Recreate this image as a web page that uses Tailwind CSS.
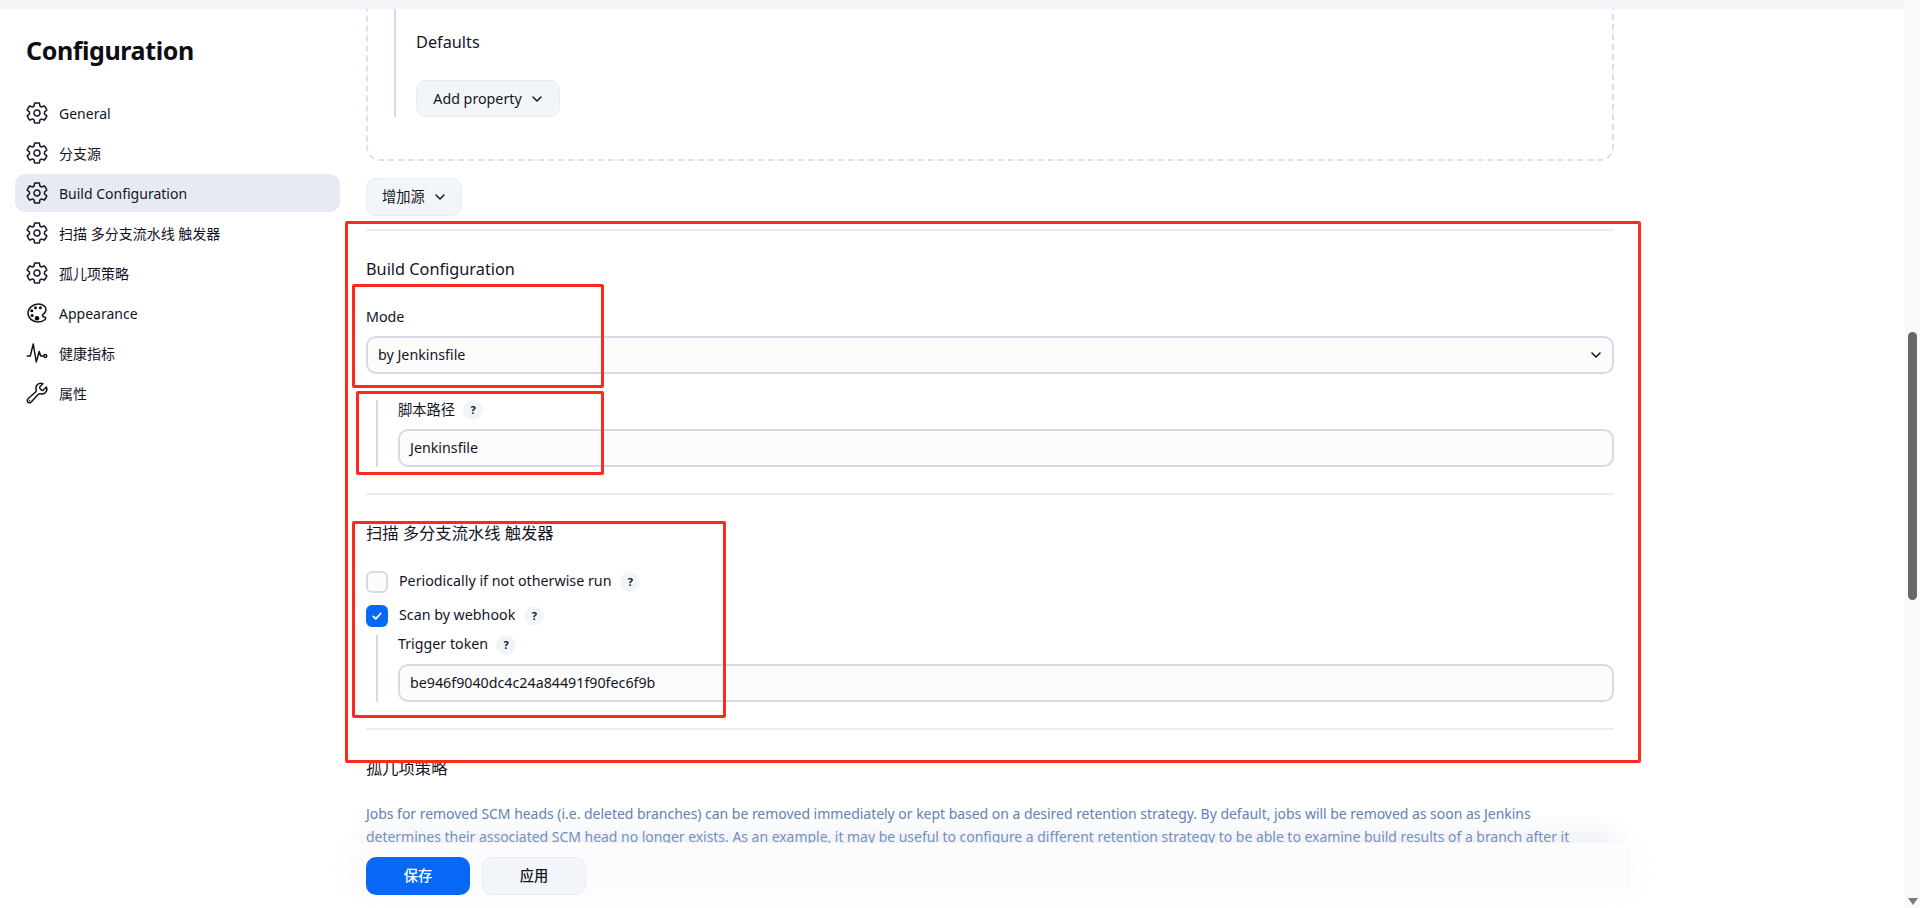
<!DOCTYPE html>
<html lang="zh">
<head>
<meta charset="utf-8">
<script src="https://cdn.jsdelivr.net/npm/@tailwindcss/browser@4"></script>
<title>Configuration</title>
</head>
<body class="bg-white">
<div class="relative flex h-[908px] w-[1920px] overflow-hidden bg-white text-[14px] text-[#14141f] font-['Noto_Sans','Noto_Sans_CJK_SC',sans-serif]">

  <!-- Soft haze behind the text that runs under the save bar -->
  <div class="absolute left-[365px] top-[830px] z-0 h-[30px] w-[1250px] bg-[#e9edf5]/70 blur-[10px]"></div>

  <!-- Sidebar -->
  <aside class="relative z-10 w-[366px] shrink-0 pl-[15px] pt-[32px]">
    <h1 class="pl-[11px] text-[25px] leading-[36px] font-bold tracking-[-0.4px] text-[#0d0d14]">Configuration</h1>
    <nav class="mt-[26px] flex w-[325px] flex-col gap-[2px]">
      <a class="flex h-[38px] items-center gap-[10px] rounded-[10px] pl-[10px]"><svg class="h-[24px] w-[24px]" viewBox="0 0 512 512"><path d="M262.29 192.31a64 64 0 1057.4 57.4 64.13 64.13 0 00-57.4-57.4zM416.39 256a154.34 154.34 0 01-1.53 20.79l45.21 35.46a10.81 10.81 0 012.45 13.75l-42.77 74a10.81 10.81 0 01-13.14 4.59l-44.9-18.08a16.11 16.11 0 00-15.17 1.75A164.48 164.48 0 01325 400.8a15.94 15.94 0 00-8.82 12.14l-6.73 47.89a11.08 11.08 0 01-10.68 9.17h-85.54a11.11 11.11 0 01-10.69-8.87l-6.72-47.82a16.07 16.07 0 00-9-12.22 155.3 155.3 0 01-21.46-12.57 16 16 0 00-15.11-1.71l-44.89 18.07a10.81 10.81 0 01-13.14-4.58l-42.77-74a10.8 10.8 0 012.45-13.75l38.21-30a16.05 16.05 0 006-14.08c-.36-4.17-.58-8.33-.58-12.5s.21-8.27.58-12.35a16 16 0 00-6.07-13.94l-38.19-30A10.81 10.81 0 0149.48 186l42.77-74a10.81 10.81 0 0113.14-4.59l44.9 18.08a16.11 16.11 0 0015.17-1.75A164.48 164.48 0 01187 111.2a15.94 15.94 0 008.82-12.14l6.73-47.89A11.08 11.08 0 01213.23 42h85.54a11.11 11.11 0 0110.69 8.87l6.72 47.82a16.07 16.07 0 009 12.22 155.3 155.3 0 0121.46 12.57 16 16 0 0015.11 1.71l44.89-18.07a10.81 10.81 0 0113.14 4.58l42.77 74a10.8 10.8 0 01-2.45 13.75l-38.21 30a16.05 16.05 0 00-6.07 14.08c.33 4.14.55 8.3.55 12.47z" fill="none" stroke="currentColor" stroke-linecap="round" stroke-linejoin="round" stroke-width="32"/></svg><span>General</span></a>
      <a class="flex h-[38px] items-center gap-[10px] rounded-[10px] pl-[10px]"><svg class="h-[24px] w-[24px]" viewBox="0 0 512 512"><path d="M262.29 192.31a64 64 0 1057.4 57.4 64.13 64.13 0 00-57.4-57.4zM416.39 256a154.34 154.34 0 01-1.53 20.79l45.21 35.46a10.81 10.81 0 012.45 13.75l-42.77 74a10.81 10.81 0 01-13.14 4.59l-44.9-18.08a16.11 16.11 0 00-15.17 1.75A164.48 164.48 0 01325 400.8a15.94 15.94 0 00-8.82 12.14l-6.73 47.89a11.08 11.08 0 01-10.68 9.17h-85.54a11.11 11.11 0 01-10.69-8.87l-6.72-47.82a16.07 16.07 0 00-9-12.22 155.3 155.3 0 01-21.46-12.57 16 16 0 00-15.11-1.71l-44.89 18.07a10.81 10.81 0 01-13.14-4.58l-42.77-74a10.8 10.8 0 012.45-13.75l38.21-30a16.05 16.05 0 006-14.08c-.36-4.17-.58-8.33-.58-12.5s.21-8.27.58-12.35a16 16 0 00-6.07-13.94l-38.19-30A10.81 10.81 0 0149.48 186l42.77-74a10.81 10.81 0 0113.14-4.59l44.9 18.08a16.11 16.11 0 0015.17-1.75A164.48 164.48 0 01187 111.2a15.94 15.94 0 008.82-12.14l6.73-47.89A11.08 11.08 0 01213.23 42h85.54a11.11 11.11 0 0110.69 8.87l6.72 47.82a16.07 16.07 0 009 12.22 155.3 155.3 0 0121.46 12.57 16 16 0 0015.11 1.71l44.89-18.07a10.81 10.81 0 0113.14 4.58l42.77 74a10.8 10.8 0 01-2.45 13.75l-38.21 30a16.05 16.05 0 00-6.07 14.08c.33 4.14.55 8.3.55 12.47z" fill="none" stroke="currentColor" stroke-linecap="round" stroke-linejoin="round" stroke-width="32"/></svg><span>分支源</span></a>
      <a class="flex h-[38px] items-center gap-[10px] rounded-[10px] bg-[#e6ebf3] pl-[10px]"><svg class="h-[24px] w-[24px]" viewBox="0 0 512 512"><path d="M262.29 192.31a64 64 0 1057.4 57.4 64.13 64.13 0 00-57.4-57.4zM416.39 256a154.34 154.34 0 01-1.53 20.79l45.21 35.46a10.81 10.81 0 012.45 13.75l-42.77 74a10.81 10.81 0 01-13.14 4.59l-44.9-18.08a16.11 16.11 0 00-15.17 1.75A164.48 164.48 0 01325 400.8a15.94 15.94 0 00-8.82 12.14l-6.73 47.89a11.08 11.08 0 01-10.68 9.17h-85.54a11.11 11.11 0 01-10.69-8.87l-6.72-47.82a16.07 16.07 0 00-9-12.22 155.3 155.3 0 01-21.46-12.57 16 16 0 00-15.11-1.71l-44.89 18.07a10.81 10.81 0 01-13.14-4.58l-42.77-74a10.8 10.8 0 012.45-13.75l38.21-30a16.05 16.05 0 006-14.08c-.36-4.17-.58-8.33-.58-12.5s.21-8.27.58-12.35a16 16 0 00-6.07-13.94l-38.19-30A10.81 10.81 0 0149.48 186l42.77-74a10.81 10.81 0 0113.14-4.59l44.9 18.08a16.11 16.11 0 0015.17-1.75A164.48 164.48 0 01187 111.2a15.94 15.94 0 008.82-12.14l6.73-47.89A11.08 11.08 0 01213.23 42h85.54a11.11 11.11 0 0110.69 8.87l6.72 47.82a16.07 16.07 0 009 12.22 155.3 155.3 0 0121.46 12.57 16 16 0 0015.11 1.71l44.89-18.07a10.81 10.81 0 0113.14 4.58l42.77 74a10.8 10.8 0 01-2.45 13.75l-38.21 30a16.05 16.05 0 00-6.07 14.08c.33 4.14.55 8.3.55 12.47z" fill="none" stroke="currentColor" stroke-linecap="round" stroke-linejoin="round" stroke-width="32"/></svg><span>Build Configuration</span></a>
      <a class="flex h-[38px] items-center gap-[10px] rounded-[10px] pl-[10px]"><svg class="h-[24px] w-[24px]" viewBox="0 0 512 512"><path d="M262.29 192.31a64 64 0 1057.4 57.4 64.13 64.13 0 00-57.4-57.4zM416.39 256a154.34 154.34 0 01-1.53 20.79l45.21 35.46a10.81 10.81 0 012.45 13.75l-42.77 74a10.81 10.81 0 01-13.14 4.59l-44.9-18.08a16.11 16.11 0 00-15.17 1.75A164.48 164.48 0 01325 400.8a15.94 15.94 0 00-8.82 12.14l-6.73 47.89a11.08 11.08 0 01-10.68 9.17h-85.54a11.11 11.11 0 01-10.69-8.87l-6.72-47.82a16.07 16.07 0 00-9-12.22 155.3 155.3 0 01-21.46-12.57 16 16 0 00-15.11-1.71l-44.89 18.07a10.81 10.81 0 01-13.14-4.58l-42.77-74a10.8 10.8 0 012.45-13.75l38.21-30a16.05 16.05 0 006-14.08c-.36-4.17-.58-8.33-.58-12.5s.21-8.27.58-12.35a16 16 0 00-6.07-13.94l-38.19-30A10.81 10.81 0 0149.48 186l42.77-74a10.81 10.81 0 0113.14-4.59l44.9 18.08a16.11 16.11 0 0015.17-1.75A164.48 164.48 0 01187 111.2a15.94 15.94 0 008.82-12.14l6.73-47.89A11.08 11.08 0 01213.23 42h85.54a11.11 11.11 0 0110.69 8.87l6.72 47.82a16.07 16.07 0 009 12.22 155.3 155.3 0 0121.46 12.57 16 16 0 0015.11 1.71l44.89-18.07a10.81 10.81 0 0113.14 4.58l42.77 74a10.8 10.8 0 01-2.45 13.75l-38.21 30a16.05 16.05 0 00-6.07 14.08c.33 4.14.55 8.3.55 12.47z" fill="none" stroke="currentColor" stroke-linecap="round" stroke-linejoin="round" stroke-width="32"/></svg><span>扫描 多分支流水线 触发器</span></a>
      <a class="flex h-[38px] items-center gap-[10px] rounded-[10px] pl-[10px]"><svg class="h-[24px] w-[24px]" viewBox="0 0 512 512"><path d="M262.29 192.31a64 64 0 1057.4 57.4 64.13 64.13 0 00-57.4-57.4zM416.39 256a154.34 154.34 0 01-1.53 20.79l45.21 35.46a10.81 10.81 0 012.45 13.75l-42.77 74a10.81 10.81 0 01-13.14 4.59l-44.9-18.08a16.11 16.11 0 00-15.17 1.75A164.48 164.48 0 01325 400.8a15.94 15.94 0 00-8.82 12.14l-6.73 47.89a11.08 11.08 0 01-10.68 9.17h-85.54a11.11 11.11 0 01-10.69-8.87l-6.72-47.82a16.07 16.07 0 00-9-12.22 155.3 155.3 0 01-21.46-12.57 16 16 0 00-15.11-1.71l-44.89 18.07a10.81 10.81 0 01-13.14-4.58l-42.77-74a10.8 10.8 0 012.45-13.75l38.21-30a16.05 16.05 0 006-14.08c-.36-4.17-.58-8.33-.58-12.5s.21-8.27.58-12.35a16 16 0 00-6.07-13.94l-38.19-30A10.81 10.81 0 0149.48 186l42.77-74a10.81 10.81 0 0113.14-4.59l44.9 18.08a16.11 16.11 0 0015.17-1.75A164.48 164.48 0 01187 111.2a15.94 15.94 0 008.82-12.14l6.73-47.89A11.08 11.08 0 01213.23 42h85.54a11.11 11.11 0 0110.69 8.87l6.72 47.82a16.07 16.07 0 009 12.22 155.3 155.3 0 0121.46 12.57 16 16 0 0015.11 1.71l44.89-18.07a10.81 10.81 0 0113.14 4.58l42.77 74a10.8 10.8 0 01-2.45 13.75l-38.21 30a16.05 16.05 0 00-6.07 14.08c.33 4.14.55 8.3.55 12.47z" fill="none" stroke="currentColor" stroke-linecap="round" stroke-linejoin="round" stroke-width="32"/></svg><span>孤儿项策略</span></a>
      <a class="flex h-[38px] items-center gap-[10px] rounded-[10px] pl-[10px]"><svg class="h-[24px] w-[24px]" viewBox="0 0 512 512"><path d="M430.11 347.9c-6.6-6.1-16.3-7.6-24.6-9-11.5-1.9-15.9-4-22.6-10-14.3-12.7-14.3-31.1 0-43.8l30.3-26.9c46.4-41 46.4-108.2 0-149.2-34.2-30.1-80.1-45-127.8-45-55.7 0-113.9 20.3-158.8 60.1-83.5 73.8-83.5 194.7 0 268.5 41.5 36.7 97.5 55 152.9 55.4h1.7c55.4 0 110-17.9 148.8-52.4 14.4-12.7 12-36.6.1-47.7z" fill="none" stroke="currentColor" stroke-miterlimit="10" stroke-width="32"/><circle cx="144" cy="208" r="32"/><circle cx="152" cy="311" r="32"/><circle cx="224" cy="144" r="32"/><circle cx="256" cy="367" r="48"/><circle cx="328" cy="144" r="32"/></svg><span>Appearance</span></a>
      <a class="flex h-[38px] items-center gap-[10px] rounded-[10px] pl-[10px]"><svg class="h-[24px] w-[24px]" viewBox="0 0 512 512" fill="none" stroke="currentColor" stroke-width="32" stroke-linecap="round" stroke-linejoin="round"><path d="M48 320h64l64-256 64 384 64-224 32 96h48"/><circle cx="432" cy="320" r="32"/></svg><span>健康指标</span></a>
      <a class="flex h-[38px] items-center gap-[10px] rounded-[10px] pl-[10px]"><svg class="h-[24px] w-[24px]" viewBox="0 0 512 512"><path d="M393.87 190a32.1 32.1 0 01-45.25 0l-26.57-26.57a32.09 32.09 0 010-45.26L382.19 58a1 1 0 00-.3-1.64c-38.82-16.64-89.15-8.16-121.11 23.57-30.58 30.35-32.32 76-21.12 115.84a31.93 31.93 0 01-9.06 32.08L64 380a48.17 48.17 0 1068 68l153.86-167a31.93 31.93 0 0131.6-9.13c39.54 10.59 84.54 8.6 114.72-21.19 32.49-32 39.5-88.56 23.75-120.93a1 1 0 00-1.6-.26z" fill="none" stroke="currentColor" stroke-linecap="round" stroke-miterlimit="10" stroke-width="32"/><circle cx="96" cy="416" r="16" fill="currentColor"/></svg><span>属性</span></a>
    </nav>
  </aside>

  <!-- Main form, scrolled so the dashed card starts above the window -->
  <main class="relative z-10 w-[1248px] shrink-0 text-[14.25px]">
    <div class="-mt-[40px] h-[201px] rounded-b-[14px] border-2 border-dashed border-[#dbe2ec] pl-[26px]">
      <div class="flex h-[155px] flex-col border-l-2 border-[#d5dae8] pl-[20px]">
        <div class="mt-[69px] text-[16.3px] leading-[22px]">Defaults</div>
        <button class="mt-[27px] flex h-[38px] w-[144px] items-center justify-center gap-[9px] rounded-[10px] border border-[#e9edf3] bg-[#f2f5f9]">Add property<svg class="h-[12px] w-[12px]" viewBox="0 0 12 12" fill="none" stroke="currentColor" stroke-width="1.5" stroke-linecap="round" stroke-linejoin="round"><path d="M2 4l4 4 4-4"/></svg></button>
      </div>
    </div>

    <button class="mt-[17px] flex h-[38px] w-[96px] items-center justify-center gap-[9px] rounded-[10px] border border-[#e9edf3] bg-[#f2f5f9]"><span>增加源</span><svg class="h-[12px] w-[12px]" viewBox="0 0 12 12" fill="none" stroke="currentColor" stroke-width="1.5" stroke-linecap="round" stroke-linejoin="round"><path d="M2 4l4 4 4-4"/></svg></button>
    <div class="mt-[13px] h-[2px] bg-[#e9edf3]"></div>

    <h2 class="mt-[27px] text-[16.3px] leading-[22px] font-normal">Build Configuration</h2>
    <div class="mt-[26px] leading-[22px]">Mode</div>
    <div class="mt-[8px] flex h-[38px] items-center justify-between rounded-[10px] border-2 border-[#d5dae8] bg-[#fcfcfd] pl-[10px] pr-[10px]"><span>by Jenkinsfile</span><svg class="h-[12px] w-[12px]" viewBox="0 0 12 12" fill="none" stroke="currentColor" stroke-width="1.6" stroke-linecap="round" stroke-linejoin="round"><path d="M2 4l4 4 4-4"/></svg></div>

    <div class="mt-[26px] ml-[10px] border-l-2 border-[#d5dae8] pl-[20px]">
      <div class="flex h-[20px] items-center gap-[8px]"><span>脚本路径</span><span class="flex h-[20px] w-[20px] items-center justify-center rounded-full bg-[#f1f4f8] text-[11px] font-bold">?</span></div>
      <div class="mt-[9px] flex h-[38px] items-center rounded-[10px] border-2 border-[#d5dae8] bg-[#fcfcfd] pl-[10px]"><span>Jenkinsfile</span></div>
    </div>
    <div class="mt-[26px] h-[2px] bg-[#e9edf3]"></div>

    <h2 class="mt-[27px] text-[16.3px] leading-[22px] font-normal">扫描 多分支流水线 触发器</h2>
    <div class="mt-[27px] flex h-[22px] items-center">
      <span class="h-[22px] w-[22px] rounded-[6px] border-2 border-[#d5dae8] bg-[#fcfcfd]"></span>
      <span class="ml-[11px] pb-[2px]">Periodically if not otherwise run</span>
      <span class="ml-[9px] flex h-[20px] w-[20px] items-center justify-center rounded-full bg-[#f1f4f8] text-[11px] font-bold">?</span>
    </div>
    <div class="mt-[12px] flex h-[22px] items-center">
      <span class="flex h-[22px] w-[22px] items-center justify-center rounded-[6px] bg-[#0768f5]"><svg class="h-[12px] w-[12px]" viewBox="0 0 12 12" fill="none" stroke="white" stroke-width="1.7" stroke-linecap="round" stroke-linejoin="round"><path d="M2.2 6.4l2.6 2.5 5-5.6"/></svg></span>
      <span class="ml-[11px] pb-[2px]">Scan by webhook</span>
      <span class="ml-[9px] flex h-[20px] w-[20px] items-center justify-center rounded-full bg-[#f1f4f8] text-[11px] font-bold">?</span>
    </div>
    <div class="mt-[8px] ml-[10px] border-l-2 border-[#d5dae8] pl-[20px]">
      <div class="flex h-[20px] items-center gap-[8px]"><span class="pb-[2px]">Trigger token</span><span class="flex h-[20px] w-[20px] items-center justify-center rounded-full bg-[#f1f4f8] text-[11px] font-bold">?</span></div>
      <div class="mt-[9px] flex h-[38px] items-center rounded-[10px] border-2 border-[#d5dae8] bg-[#fcfcfd] pl-[10px]"><span>be946f9040dc4c24a84491f90fec6f9b</span></div>
    </div>
    <div class="mt-[26px] h-[2px] bg-[#e9edf3]"></div>

    <h2 class="mt-[27px] text-[16.3px] leading-[22px] font-normal">孤儿项策略</h2>
    <p class="mt-[23px] text-[14px] leading-[23px] tracking-[-0.03px] text-[#6480b4]">Jobs for removed SCM heads (i.e. deleted branches) can be removed immediately or kept based on a desired retention strategy. By default, jobs will be removed as soon as Jenkins<br>determines their associated SCM head no longer exists. As an example, it may be useful to configure a different retention strategy to be able to examine build results of a branch after it<br>has been removed.</p>
  </main>

  <!-- Sticky save bar -->
  <div class="absolute bottom-0 left-0 right-[15px] z-20 h-[65px] bg-white">
    <div class="absolute left-[350px] top-0 h-[50px] w-[1290px] bg-[#f4f6fa]/40 blur-[14px]"></div>
    <div class="absolute left-[366px] top-[14px] flex gap-[12px] text-[14.25px]">
      <button class="h-[38px] w-[104px] rounded-[10px] bg-[#0768f5] font-medium text-white">保存</button>
      <button class="h-[38px] w-[104px] rounded-[10px] border border-[#e9edf3] bg-[#f2f5f9] font-medium">应用</button>
    </div>
  </div>

  <!-- Top fade strip -->
  <div class="absolute left-0 right-[15px] top-0 z-20 h-[9px] bg-[#f3f5f8]"></div>

  <!-- Scrollbar -->
  <div class="absolute bottom-0 right-0 top-0 z-20 w-[15px] bg-[#fafafa]">
    <div class="absolute left-[3px] top-[332px] h-[268px] w-[9px] rounded-full bg-[#686868]"></div>
    <div class="absolute bottom-[3px] left-[3px] h-0 w-0 border-x-[5px] border-t-[7px] border-x-transparent border-t-[#7a7a7a]"></div>
  </div>

  <!-- Red annotation boxes drawn on the screenshot -->
  <div class="absolute left-[345px] top-[221px] z-30 h-[542px] w-[1296px] rounded-[2px] border-[3px] border-[#ff2a1f]"></div>
  <div class="absolute left-[352px] top-[284px] z-30 h-[104px] w-[252px] rounded-[2px] border-[3px] border-[#ff2a1f]"></div>
  <div class="absolute left-[356px] top-[391px] z-30 h-[84px] w-[248px] rounded-[2px] border-[3px] border-[#ff2a1f]"></div>
  <div class="absolute left-[352px] top-[521px] z-30 h-[197px] w-[374px] rounded-[2px] border-[3px] border-[#ff2a1f]"></div>
</div>
</body>
</html>
